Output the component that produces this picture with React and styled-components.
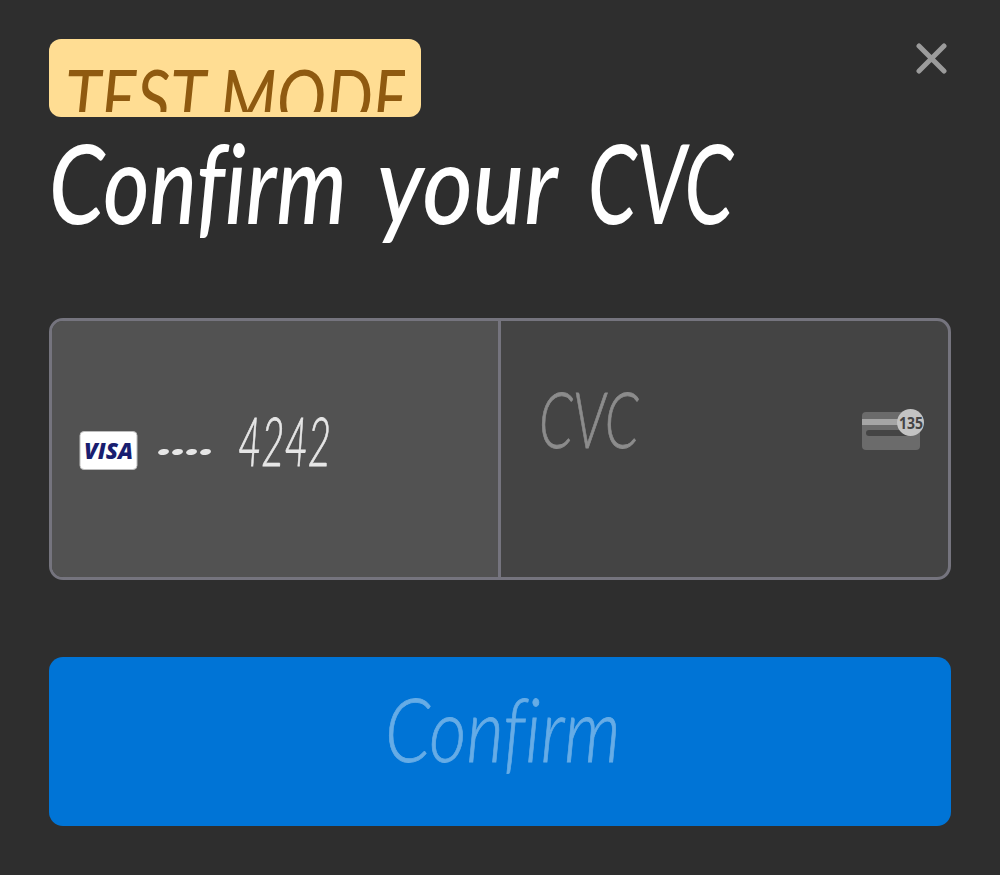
import React from "react";
import styled, { createGlobalStyle } from "styled-components";

const GlobalStyle = createGlobalStyle`
  * { box-sizing: border-box; }
  body { margin: 0; background: #2e2e2e; }
`;

const Dialog = styled.main`
  width: 1000px;
  height: 875px;
  padding: 39px 49px 0;
  background: #2e2e2e;
  overflow: hidden;
  font-family: Lato, "Liberation Sans", sans-serif;
`;

const Header = styled.header`
  display: flex;
  justify-content: space-between;
  align-items: flex-start;
  height: 78px;
`;

const Script = styled.span`
  display: block;
  flex: none;
  width: ${(p) => (p.$width ? `${p.$width}px` : "max-content")};
  font-size: ${(p) => p.$size}px;
  line-height: ${(p) => p.$line}px;
  font-weight: ${(p) => p.$weight || 300};
  font-style: italic;
  font-variant-ligatures: none;
  -webkit-text-stroke: ${(p) => p.$stroke || 0}px currentColor;
  white-space: pre;
  transform: scaleX(${(p) => p.$stretch || 1});
  transform-origin: ${(p) => p.$origin || "left"} center;
`;

const Badge = styled.div`
  width: 372px;
  height: 78px;
  padding: 5px 16px;
  border-radius: 12px;
  background: #ffdd93;
  color: #8f5a10;
`;

const BadgeClip = styled.div`
  height: 68px;
  overflow: hidden;
`;

const CloseButton = styled.button`
  display: flex;
  margin: 4px 4px 0 0;
  padding: 0;
  border: 0;
  background: none;
  color: #9b9b9b;
`;

const Title = styled.h1`
  display: flex;
  height: 140px;
  margin: 0;
  color: #fff;
`;

const Fields = styled.div`
  display: grid;
  grid-template-columns: 449px 1fr;
  height: 262px;
  margin-top: 61px;
  border: 3px solid #75747e;
  border-radius: 14px;
  background: #444;
  overflow: hidden;
`;

const SavedCard = styled.div`
  display: flex;
  align-items: flex-start;
  padding: 110px 0 0 27px;
  border-right: 3px solid #75747e;
  background: #525252;
  color: #e6e6e6;
`;

const Dots = styled.span`
  display: flex;
  gap: 3px;
  margin: 18px 27px 0 20px;
`;

const Dot = styled.i`
  width: 11px;
  height: 6px;
  border-radius: 50%;
  background: #e6e6e6;
  transform: rotate(-8deg);
`;

const Digits = styled.div`
  margin-top: -36px;
`;

const CvcField = styled.div`
  display: flex;
  justify-content: space-between;
  align-items: flex-start;
  padding: 56px 23px 0 38px;
  color: #8c8c8c;
`;

const CvcIcon = styled.svg`
  margin-top: 30px;
  flex: none;
`;

const ConfirmButton = styled.button`
  display: flex;
  justify-content: center;
  align-items: flex-start;
  width: 902px;
  height: 169px;
  margin-top: 77px;
  padding: 18px 0 0 5px;
  border: 0;
  border-radius: 14px;
  background: #0074d6;
  color: #66ace6;
  font-family: inherit;
`;

export default function App() {
  return (
    <Dialog>
      <GlobalStyle />
      <Header>
        <Badge>
          <BadgeClip>
            <Script $size={80} $line={105} $weight={400} $stretch={0.825}>TEST MODE</Script>
          </BadgeClip>
        </Badge>
        <CloseButton aria-label="Close">
          <svg width="31" height="31" viewBox="0 0 31 31" fill="none" stroke="currentColor" strokeWidth="5" strokeLinecap="round">
            <path d="M3 3 28 28M28 3 3 28" />
          </svg>
        </CloseButton>
      </Header>
      <Title>
        <Script $size={110} $line={128} $weight={500} $stretch={0.81} $width={328}>{"Confirm "}</Script>
        <Script $size={110} $line={128} $weight={500} $stretch={0.88} $width={211}>{"your "}</Script>
        <Script $size={110} $line={128} $weight={500} $stretch={0.71}>CVC</Script>
      </Title>
      <Fields>
        <SavedCard>
          <svg width="59" height="39" viewBox="0 0 59 39">
            <rect x="1" y="0.5" width="57" height="38" rx="4" fill="#fff" stroke="#bdbdbd" />
            <text x="5" y="27.500" textLength="49" lengthAdjust="spacingAndGlyphs" fill="#191e70" fontFamily="Open Sans, sans-serif" fontSize="22.500" fontWeight="800" fontStyle="italic">VISA</text>
          </svg>
          <Dots>
            <Dot /><Dot /><Dot /><Dot />
          </Dots>
          <Digits>
            <Script $size={68} $line={90} $stretch={0.59} $stroke={0.8}>4242</Script>
          </Digits>
        </SavedCard>
        <CvcField>
          <Script $size={76} $line={84} $stretch={0.71} $stroke={0.8}>CVC</Script>
          <CvcIcon width="64" height="46" viewBox="0 0 64 46">
            <rect x="1" y="5" width="58" height="38" rx="4" fill="#6b6b6b" />
            <rect x="1" y="12" width="58" height="6" fill="#a5a5a5" />
            <rect x="5" y="23" width="43" height="6" rx="3" fill="#444" />
            <circle cx="49.500" cy="15.500" r="13.500" fill="#c3c3c3" />
            <text x="38" y="21.500" textLength="24" lengthAdjust="spacingAndGlyphs" fill="#444" fontFamily="Open Sans, sans-serif" fontSize="16.500" fontWeight="700">135</text>
          </CvcIcon>
        </CvcField>
      </Fields>
      <ConfirmButton>
        <Script $size={88} $line={107} $stretch={0.82} $stroke={0.8} $origin="center">Confirm</Script>
      </ConfirmButton>
    </Dialog>
  );
}
